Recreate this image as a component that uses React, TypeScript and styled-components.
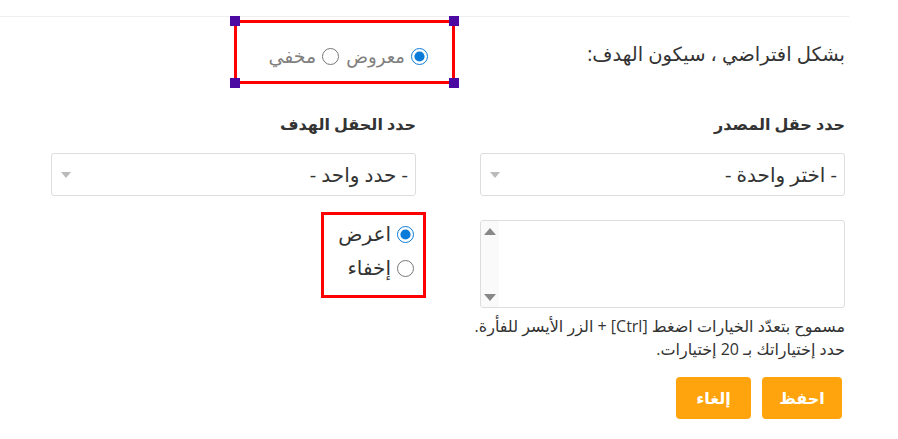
import styled, { createGlobalStyle } from "styled-components";

const GlobalStyle = createGlobalStyle`
  html, body {
    margin: 0;
    background: #fff;
  }
  body {
    font-family: "Open Sans", "DejaVu Sans", sans-serif;
    color: #333;
  }
`;

const Page = styled.div`
  direction: rtl;
  width: 898px;
  height: 439px;
  overflow: hidden;
`;

const Divider = styled.div`
  margin: 16px 49px 0 0;
  border-top: 1px solid #eee;
`;

const Body = styled.div`
  padding: 0 53px 0 52px;
`;

const DefaultRow = styled.div`
  display: flex;
  align-items: center;
  gap: 25px;
  margin-top: 3px;
`;

const RowLabel = styled.div`
  width: 365px;
  font-size: 19.5px;
  padding-top: 2px;
`;

const Marked = styled.div<{ $w: number; $h: number }>`
  position: relative;
  box-sizing: border-box;
  width: ${(p) => p.$w}px;
  height: ${(p) => p.$h}px;
  border: 3px solid #ff0000;
`;

const Handle = styled.span<{ $v: "top" | "bottom"; $h: "left" | "right" }>`
  position: absolute;
  width: 10px;
  height: 10px;
  background: #4c0aa3;
  ${(p) => p.$v}: -7px;
  ${(p) => p.$h}: -7px;
`;

const InlineGroup = styled.div`
  display: flex;
  align-items: center;
  gap: 7px;
  padding: 21px 24px 0 0;
`;

const StackGroup = styled.div`
  display: flex;
  flex-direction: column;
  gap: 10px;
  padding: 7px 9px 0 0;
`;

const Option = styled.label<{ $muted?: boolean; $size: number }>`
  display: flex;
  align-items: center;
  gap: 6px;
  font-size: ${(p) => p.$size}px;
  color: ${(p) => (p.$muted ? "#808080" : "#333")};
  line-height: 24px;
`;

const Radio = styled.input.attrs({ type: "radio" })`
  width: 17px;
  height: 17px;
  margin: 0;
  accent-color: #0b7bd9;
`;

const Columns = styled.div`
  display: grid;
  grid-template-columns: 365px 365px;
  column-gap: 64px;
  margin-top: 29px;
`;

const Column = styled.div`
  display: flex;
  flex-direction: column;
  align-items: stretch;
`;

const Heading = styled.div`
  font-size: 16px;
  font-weight: bold;
  line-height: 22px;
  margin-bottom: 18px;
`;

const SelectBox = styled.div`
  box-sizing: border-box;
  height: 43px;
  border: 1px solid #ddd;
  border-radius: 3px;
  display: flex;
  align-items: center;
  justify-content: space-between;
  padding: 0 7px 0 9px;
  font-size: 20px;
  background: #fff;
`;

const Caret = styled.span`
  width: 0;
  height: 0;
  border-left: 5px solid transparent;
  border-right: 5px solid transparent;
  border-top: 6px solid #bbb;
`;

const ListBox = styled.div`
  box-sizing: border-box;
  height: 88px;
  margin-top: 24px;
  border: 1px solid #ddd;
  border-radius: 3px;
  display: flex;
  overflow: hidden;
`;

const ScrollTrack = styled.div`
  margin-right: auto;
  width: 18px;
  background: #fafafa;
  display: flex;
  flex-direction: column;
  justify-content: space-between;
  align-items: center;
  padding: 7px 0 6px;
`;

const ScrollArrow = styled.span<{ $up?: boolean }>`
  width: 0;
  height: 0;
  border-left: 6px solid transparent;
  border-right: 6px solid transparent;
  ${(p) => (p.$up ? "border-bottom" : "border-top")}: 7px solid #888;
`;

const Help = styled.p`
  margin: 7px 0 0;
  font-size: 16px;
  line-height: 23px;
  white-space: nowrap;
`;

const Actions = styled.div`
  display: flex;
  gap: 11px;
  margin-top: 16px;
  padding-right: 3px;
`;

const Button = styled.button<{ $w: number }>`
  width: ${(p) => p.$w}px;
  height: 42px;
  border: none;
  border-radius: 4px;
  background: #ffa40d;
  color: #fff;
  font-family: inherit;
  font-size: 16px;
  font-weight: bold;
`;

const Corners = () => (
  <>
    <Handle $v="top" $h="left" />
    <Handle $v="top" $h="right" />
    <Handle $v="bottom" $h="left" />
    <Handle $v="bottom" $h="right" />
  </>
);

export default function App() {
  return (
    <Page>
      <GlobalStyle />
      <Divider />
      <Body>
        <DefaultRow>
          <RowLabel>بشكل افتراضي ، سيكون الهدف:</RowLabel>
          <Marked $w={221} $h={64}>
            <Corners />
            <InlineGroup>
              <Option $muted $size={18}>
                <Radio name="def" defaultChecked />
                معروض
              </Option>
              <Option $muted $size={19}>
                <Radio name="def" />
                مخفي
              </Option>
            </InlineGroup>
          </Marked>
        </DefaultRow>

        <Columns>
          <Column>
            <Heading>حدد حقل المصدر</Heading>
            <SelectBox>
              <span>- اختر واحدة -</span>
              <Caret />
            </SelectBox>
            <ListBox>
              <ScrollTrack>
                <ScrollArrow $up />
                <ScrollArrow />
              </ScrollTrack>
            </ListBox>
            <Help>
              مسموح بتعدّد الخيارات اضغط [Ctrl] + الزر الأيسر للفأرة.
              <br />
              حدد إختياراتك بـ 20 إختيارات.
            </Help>
            <Actions>
              <Button $w={80}>احفظ</Button>
              <Button $w={75}>إلغاء</Button>
            </Actions>
          </Column>

          <Column>
            <Heading>حدد الحقل الهدف</Heading>
            <SelectBox>
              <span>- حدد واحد -</span>
              <Caret />
            </SelectBox>
            <div style={{ marginTop: 16, marginRight: -10, alignSelf: "flex-start" }}>
              <Marked $w={105} $h={86}>
                <StackGroup>
                  <Option $size={20}>
                    <Radio name="vis" defaultChecked />
                    اعرض
                  </Option>
                  <Option $size={20}>
                    <Radio name="vis" />
                    إخفاء
                  </Option>
                </StackGroup>
              </Marked>
            </div>
          </Column>
        </Columns>
      </Body>
    </Page>
  );
}
